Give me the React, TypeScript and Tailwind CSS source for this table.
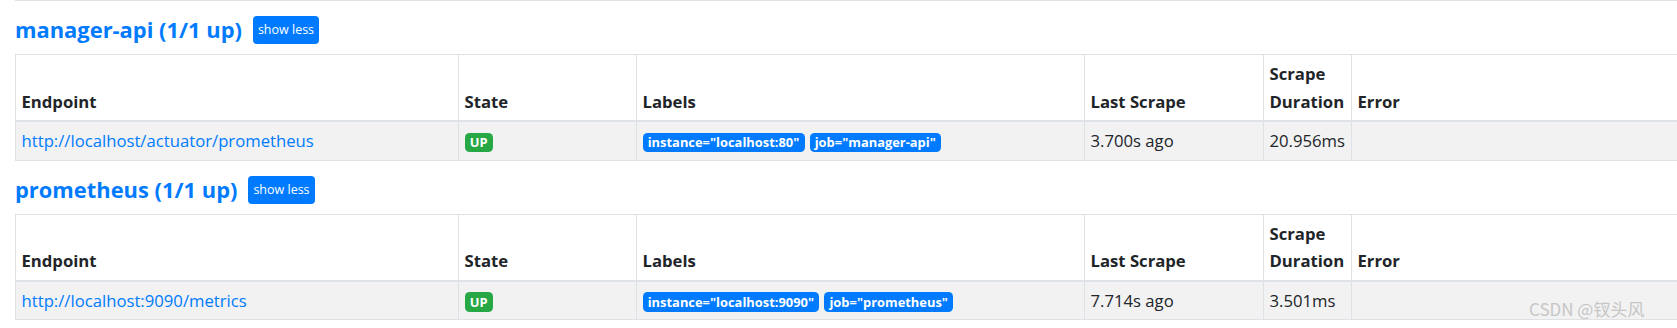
import * as React from 'react';

interface Pool {
    name: string;
    endpoint: string;
    labels: [string, string][];
    lastScrape: string;
    duration: string;
}

const pools: Pool[] = [
    {
        name: 'manager-api',
        endpoint: 'http://localhost/actuator/prometheus',
        labels: [['instance', 'localhost:80'], ['job', 'manager-api']],
        lastScrape: '3.700s ago',
        duration: '20.956ms',
    },
    {
        name: 'prometheus',
        endpoint: 'http://localhost:9090/metrics',
        labels: [['instance', 'localhost:9090'], ['job', 'prometheus']],
        lastScrape: '7.714s ago',
        duration: '3.501ms',
    },
];

const headers = ['Endpoint', 'State', 'Labels', 'Last Scrape', 'Scrape Duration', 'Error'];

const badge = 'inline-block rounded-[4.6px] px-[5.2px] py-[3.2px] align-baseline text-[12.9px] font-bold leading-none text-white';
const th = 'flex flex-col justify-end border-r border-b-2 border-[#dee2e6] bg-white px-[5.5px] py-[5px] font-bold';
const td = 'border-r border-b border-[#dee2e6] bg-[#f2f2f2] px-[5.5px] py-[5px]';

function PoolPanel({pool}: {pool: Pool}) {
    return (
        <section>
            <div className="mt-[15px] flex h-[28px] items-center">
                <a href={`#${pool.name}`} className="text-[21.9px] leading-[26px] font-bold text-[#007bff]">
                    {pool.name} (1/1 up)
                </a>
                <button
                    type="button"
                    className="ml-[11px] h-[28px] rounded-[4px] bg-[#007bff] px-[5px] text-[12.5px] leading-[28px] text-white"
                >
                    show less
                </button>
            </div>
            <div className="mt-[10px] grid w-[1700px] grid-cols-[443px_178px_448px_179px_88px_1fr] border-t border-l border-[#dee2e6] text-[16.7px] leading-[27.5px] text-[#212529]">
                {headers.map((h) => (
                    <div key={h} className={th}>{h}</div>
                ))}
                <div className={td}>
                    <a href={pool.endpoint} className="text-[#007bff]">{pool.endpoint}</a>
                </div>
                <div className={td}>
                    <span className={`${badge} bg-[#28a745]`}>UP</span>
                </div>
                <div className={td}>
                    {pool.labels.map(([k, v]) => (
                        <span key={k} className={`${badge} mr-[5px] bg-[#007bff]`}>{k}="{v}"</span>
                    ))}
                </div>
                <div className={td}>{pool.lastScrape}</div>
                <div className={td}>{pool.duration}</div>
                <div className={td}></div>
            </div>
        </section>
    );
}

export default function App() {
    return (
        <div className="relative h-[328px] w-[1677px] overflow-hidden bg-white font-['Open_Sans',sans-serif]">
            <div className="ml-[15px]">
                <div className="h-px w-[1700px] bg-[#dee2e6]" />
                {pools.map((p) => <PoolPanel key={p.name} pool={p} />)}
            </div>
            <div className="absolute top-[299px] left-[1529px] font-['Noto_Sans_CJK_SC',sans-serif] text-[17px] leading-[20px] text-[#c6c6c6]">
                CSDN @钗头风
            </div>
        </div>
    );
}
